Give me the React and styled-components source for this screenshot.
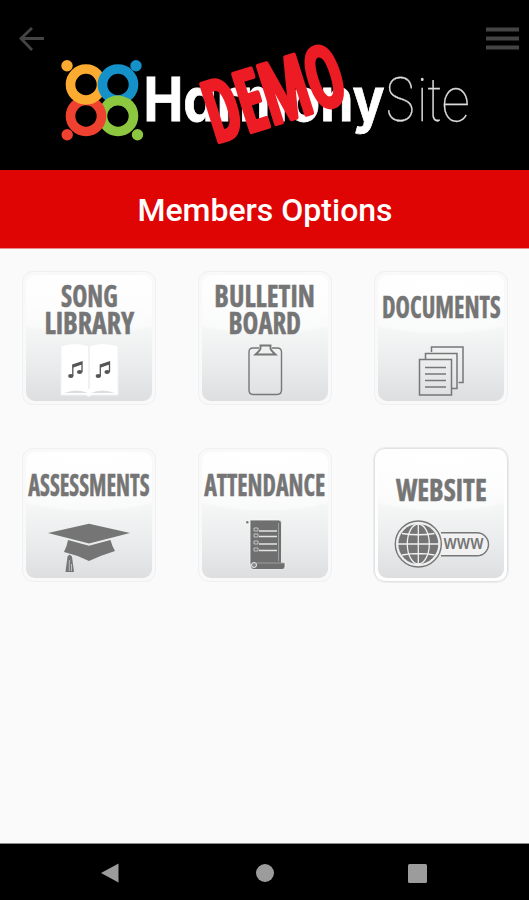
import React from 'react';
import styled, { createGlobalStyle } from 'styled-components';

const GlobalStyle = createGlobalStyle`
    body{
        margin:0;
        background-color:#fafafa;
        font-family:Roboto, "Liberation Sans", sans-serif;
    }
`;

const Screen = styled.div`
    display:flex;
    flex-direction:column;
    width:100%;
    height:100vh;
    overflow:hidden;
    background-color:#fafafa;
`;

const Header = styled.header`
    display:flex;
    align-items:flex-start;
    justify-content:space-between;
    height:170px;
    flex:none;
    box-sizing:border-box;
    padding:27px 10px 0 19px;
    background-color:#000;
`;

const IconButton = styled.button`
    display:block;
    padding:0;
    border:none;
    background:none;
    cursor:pointer;

    & svg{
        display:block;
    }
`;

const Logo = styled.svg`
    display:block;
    flex:none;
    margin-top:3px;
    overflow:visible;
`;

const DemoText = styled.text`
    font-family:"Open Sans", sans-serif;
    font-size:84px;
    font-weight:600;
    font-stretch:75%;
    fill:#ed1c24;
    stroke:#ed1c24;
    stroke-width:5px;
    stroke-linejoin:round;
`;

const TitleBar = styled.h1`
    display:flex;
    align-items:center;
    justify-content:center;
    flex:none;
    height:79px;
    margin:0;
    padding:2px 0 0 1px;
    box-sizing:border-box;
    background-color:#e00505;
    border-bottom:1px solid #e88a8a;
    color:#fff;
    font-size:32px;
    font-weight:500;
`;

const Options = styled.main`
    display:grid;
    grid-template-columns:repeat(3, 176px);
    grid-auto-rows:177px;
    align-content:start;
    place-items:center;
    flex:1;
    padding-left:1px;
    border-bottom:1px solid #8a8a8a;
`;

const Tile = styled.a`
    display:flex;
    flex-direction:column;
    align-items:center;
    justify-content:space-between;
    width:134px;
    height:134px;
    box-sizing:border-box;
    border:1px solid ${props => props.$strong ? '#e2e2e2' : '#f0f0f0'};
    border-radius:11px;
    padding:3px;
    background-color:${props => props.$strong ? '#fefefe' : '#f9f9f9'};
    outline:${props => props.$strong ? '1px solid #ececec' : 'none'};
    text-decoration:none;
`;

const Face = styled.span`
    display:flex;
    flex-direction:column;
    align-items:center;
    justify-content:space-between;
    width:126px;
    height:126px;
    border-radius:9px;
    background:
        radial-gradient(ellipse 135px 60px at 50% 0, #fff 0, rgba(255,255,255,.5) 95%, rgba(255,255,255,0) 100%),
        linear-gradient(#fcfcfc, #f4f5f5 45%, #e9eaeb 75%, #dcdee0);
`;

const Label = styled.span`
    display:flex;
    flex-direction:column;
    align-items:center;
    margin-top:${props => props.$top}px;
    color:#757575;
    font-family:"Open Sans", "Noto Sans", sans-serif;
    font-size:30px;
    font-weight:700;
    font-stretch:75%;
    line-height:27px;
    white-space:nowrap;
    -webkit-text-stroke:.5px #757575;
`;

const Line = styled.span`
    display:block;
    transform:scaleX(${props => props.$squeeze});
`;

const TileIcon = styled.svg`
    display:block;
    flex:none;
    width:134px;
    height:60px;
`;

const NavBar = styled.nav`
    display:grid;
    grid-template-columns:220px 90px 214px;
    align-items:center;
    justify-items:center;
    height:56px;
    flex:none;
    padding-top:2px;
    box-sizing:border-box;
    background-color:#000;
`;

function HarmonyLogo(){
    return(
        <Logo width="412" height="120" viewBox="59 30 412 120">
            <g fill="none" strokeWidth="9.6">
                <circle cx="118" cy="116" r="15.5" stroke="#8dc63f" />
                <circle cx="86" cy="116" r="15.5" stroke="#ef4130" />
                <circle cx="86" cy="84.5" r="15.5" stroke="#fbab2f" />
                <circle cx="118" cy="84.5" r="15.5" stroke="#1391c8" />
                <path d="M107.500 104.600A15.500 15.500 0 0 1 133 112" stroke="#8dc63f" />
            </g>
            <circle cx="67" cy="65.8" r="5.7" fill="#fbab2f" />
            <circle cx="136" cy="65.8" r="5.7" fill="#1391c8" />
            <circle cx="67.2" cy="134.7" r="5.7" fill="#ef4130" />
            <circle cx="137.5" cy="134.7" r="5.7" fill="#8dc63f" />
            <text
                x="143.5" y="120.5" textLength="241" lengthAdjust="spacingAndGlyphs"
                fontFamily="Inter, sans-serif" fontSize="60" fontWeight="700" fill="#fff"
                stroke="#fff" strokeWidth=".8"
                style={{ fontFeatureSettings: '"cv11"' }}
            >Harmony</text>
            <text
                x="384" y="120.5" textLength="87" lengthAdjust="spacingAndGlyphs"
                fontFamily="Inter, sans-serif" fontSize="60" fontWeight="100"
                fill="#ddd" stroke="#ddd" strokeWidth=".3"
            >Site</text>
            <DemoText
                transform="translate(215 143) rotate(-17.500)"
                textLength="142" lengthAdjust="spacingAndGlyphs"
            >DEMO</DemoText>
        </Logo>
    )
}

function Note({ x }){
    return(
        <g transform={`translate(${x} 20)`} fill="#555" stroke="#555">
            <ellipse cx="2.8" cy="15" rx="2.7" ry="1.9" stroke="none" />
            <ellipse cx="11.6" cy="11" rx="2.7" ry="1.9" stroke="none" />
            <path d="M4.8 15V4L14 .8V11" fill="none" strokeWidth="1.3" />
            <path d="M4.8 4L14 .8V3.6L4.8 6.8Z" stroke="none" />
        </g>
    )
}

function SongIcon(){
    return(
        <TileIcon viewBox="0 0 134 60">
            <path d="M39 5Q53 0 67 5Q81 0 96 5V54H70Q67 57 64 54H39Z" fill="#fff" stroke="#f1f1f1" />
            <path d="M67 5V48" stroke="#ececec" strokeWidth="1.5" />
            <path d="M42 52Q55 47 66 52ZM69 52Q80 47 93 52Z" fill="#dcddde" />
            <Note x={46} />
            <Note x={73.5} />
        </TileIcon>
    )
}

function ClipboardIcon(){
    return(
        <TileIcon viewBox="0 0 134 60" fill="none" stroke="#777" strokeWidth="1.4">
            <path d="M61 7H55Q51 7 51 11V49Q51 53.500 55 53.500H79Q83.500 53.500 83.500 49V11Q83.500 7 79 7H74" />
            <path d="M62.500 4.500H72.500V7.500Q73 9.500 77.500 13.500H57.500Q62 9.500 62.500 7.500Z" strokeWidth="1.9" />
        </TileIcon>
    )
}

function DocumentsIcon(){
    return(
        <TileIcon viewBox="0 0 134 60" fill="none" stroke="#777" strokeWidth="1.5">
            <path d="M57.500 11V6H89V41.500H84.500" />
            <path d="M51.500 18V12.500H83V47.500H78" />
            <path d="M45.500 18.500H77.500V54H45.500Z" />
            <path d="M51 26.500H72M51 33H72M51 39.500H72M51 46H72" />
        </TileIcon>
    )
}

function GraduationIcon(){
    return(
        <TileIcon viewBox="0 0 134 60" fill="#757575">
            <path d="M26 15L67 5.800L108 15L67 25.500Z" />
            <path d="M46 22L67 27.800L88.500 22Q90 28 93 33Q80 37 67 43Q55 37 42 34Q45 28 46 22Z" />
            <path d="M45.500 38.500L47.500 36.500L50 38.500L52 54H43.500Z" />
            <path d="M47.300 42V53M49.500 46V53" stroke="#ddd" strokeWidth=".7" />
        </TileIcon>
    )
}

function ScrollIcon(){
    return(
        <TileIcon viewBox="0 0 134 60">
            <path d="M52 2H80.500Q84 2 83.500 6V44.500H87V49Q87 51.500 84 51.500H55Q52 50 52 45Z" fill="#6f6f6f" stroke="#f8f8f8" strokeWidth=".8" />
            <circle cx="49.300" cy="4.200" r="1.200" fill="#777" />
            <path d="M80.500 5V43M58 45H86" stroke="#aaa" strokeWidth=".8" />
            <circle cx="56" cy="47" r="2.500" fill="#888" stroke="#eee" strokeWidth="1" />
            <path d="M61 13H79M61 18.500H79M61 26H79M61 32.500H79" stroke="#e4e4e4" strokeWidth="1.300" />
            <path d="M56 10H60V13H56ZM56 16H60V19H56ZM56 23H60V26H56ZM56 30H60V33H56Z" fill="none" stroke="#ccc" strokeWidth=".9" />
        </TileIcon>
    )
}

function GlobeIcon(){
    return(
        <TileIcon viewBox="0 0 134 60" fill="none" stroke="#777" strokeWidth="1.4">
            <path d="M67 14.800H103A11.500 11.500 0 0 1 103 37.800H67" fill="#f1f1f1" />
            <circle cx="44.300" cy="26" r="23" fill="#efefef" />
            <circle cx="44.300" cy="26" r="20" fill="#757575" stroke="none" />
            <g stroke="#f1f1f1" strokeWidth="1.300">
                <path d="M44.300 6V46M24 26H65M28 15.500Q44.300 18 60.500 15.500M28 37Q44.300 34 60.500 37" />
                <ellipse cx="44.300" cy="26" rx="11" ry="20" />
            </g>
            <text
                x="69.5" y="31" textLength="40" lengthAdjust="spacingAndGlyphs" fill="#757575" stroke="none"
                fontFamily="Open Sans, sans-serif" fontSize="19" fontWeight="600"
            >www</text>
        </TileIcon>
    )
}

const options = [
    { lines: [['SONG', .85], ['LIBRARY', .93]], top: 7, icon: SongIcon },
    { lines: [['BULLETIN', .92], ['BOARD', .89]], top: 7, icon: ClipboardIcon },
    { lines: [['DOCUMENTS', .81]], top: 18, icon: DocumentsIcon },
    { lines: [['ASSESSMENTS', .75]], top: 19, icon: GraduationIcon },
    { lines: [['ATTENDANCE', .8]], top: 19, icon: ScrollIcon },
    { lines: [['WEBSITE', .92]], top: 24, icon: GlobeIcon, strong: true },
];

export default function App(){
    return(
        <Screen>
            <GlobalStyle />
            <Header>
                <IconButton aria-label="Back">
                    <svg width="25" height="24" viewBox="0 0 25 24" fill="none" stroke="#444" strokeWidth="2.800">
                        <path d="M25 11.500H2M13 1L2 11.500L13 23" />
                    </svg>
                </IconButton>
                <HarmonyLogo />
                <IconButton aria-label="Menu">
                    <svg width="33" height="24" viewBox="0 0 33 24" fill="#444">
                        <path d="M0 .5H33V4.500H0ZM0 9.500H33V13.500H0ZM0 18.500H33V22.500H0Z" />
                    </svg>
                </IconButton>
            </Header>
            <TitleBar>Members Options</TitleBar>
            <Options>
                {options.map(({ lines, top, icon: Icon, strong }) => (
                    <Tile key={lines[0][0]} $strong={strong}>
                        <Face>
                            <Label $top={top}>
                                {lines.map(([line, squeeze]) => <Line key={line} $squeeze={squeeze}>{line}</Line>)}
                            </Label>
                            <Icon />
                        </Face>
                    </Tile>
                ))}
            </Options>
            <NavBar>
                <svg width="18" height="20" viewBox="0 0 18 20" fill="#9c9c9c">
                    <path d="M0 10L17.500 .5V19.500Z" />
                </svg>
                <svg width="18" height="18" viewBox="0 0 18 18" fill="#9c9c9c">
                    <circle cx="9" cy="9" r="9" />
                </svg>
                <svg width="19" height="19" viewBox="0 0 19 19" fill="#9c9c9c">
                    <rect width="19" height="19" rx="1.500" />
                </svg>
            </NavBar>
        </Screen>
    )
}
